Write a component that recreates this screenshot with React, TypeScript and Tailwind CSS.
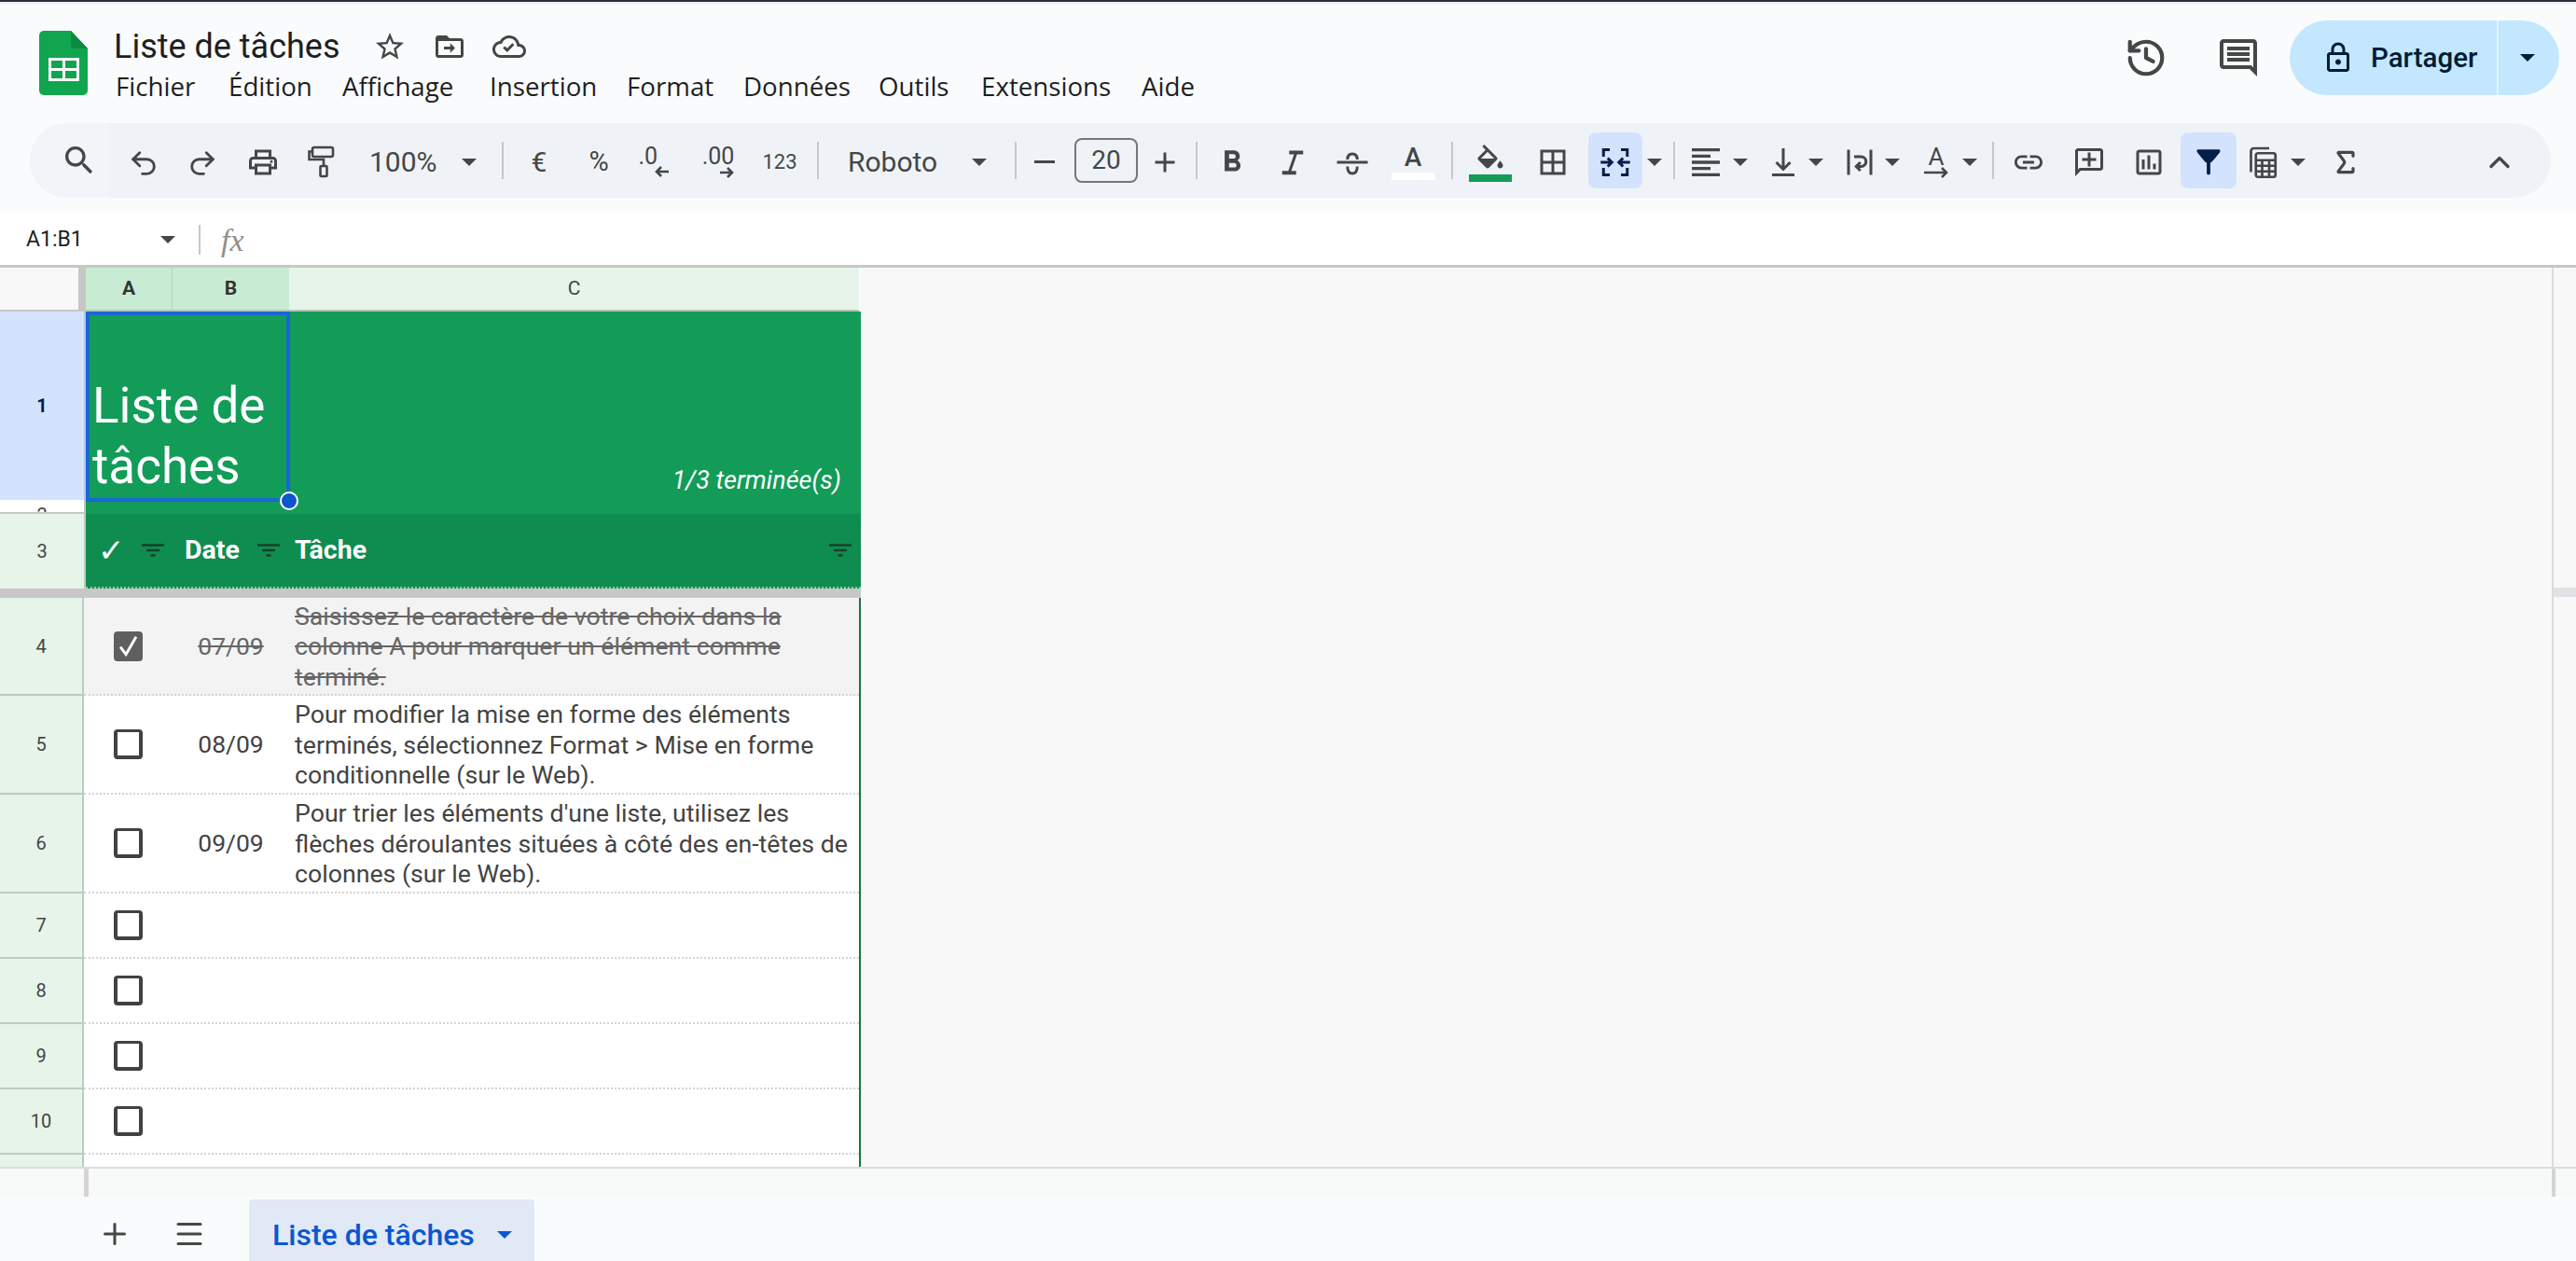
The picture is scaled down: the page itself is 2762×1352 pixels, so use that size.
import React from 'react';
import { ChevronUp, History, Menu, Plus, Redo2, Sigma, Undo2 } from 'lucide-react';
import { MdFormatBold } from 'react-icons/md';

const ROBOTO = "font-['Roboto',sans-serif]";

const Ico = ({ d, className = 'w-[36px] h-[36px] text-[#444746]' }: { d: string; className?: string }) => (
  <svg viewBox="0 0 24 24" fill="currentColor" className={className}>
    <path d={d} />
  </svg>
);

const Caret = ({ className = 'text-[#444746]' }: { className?: string }) => (
  <svg viewBox="0 0 16 8" fill="currentColor" className={'w-[16px] h-[8px] shrink-0 ' + className}>
    <path d="M0 0h16L8 8z" />
  </svg>
);

const Btn = ({ className, children }: { className: string; children?: React.ReactNode }) => (
  <div className={'flex items-center justify-center shrink-0 h-[60px] pt-[3px] text-[#444746] ' + className}>{children}</div>
);

const Sep = ({ className = '' }: { className?: string }) => (
  <div className={'w-[2px] h-[40px] bg-[#c7c7c7] shrink-0 ' + className} />
);

const SmallArrow = ({ left }: { left?: boolean }) => (
  <svg viewBox="0 0 16 12" fill="none" stroke="currentColor" strokeWidth="2.6" className="w-[16px] h-[12px]">
    {left ? <path d="M15 6H2M7 1 2 6l5 5" /> : <path d="M1 6h13M9 1l5 5-5 5" />}
  </svg>
);

const FilterLines = () => (
  <svg viewBox="0 0 24 14" fill="none" stroke="#17402c" strokeWidth="2.4" className="w-[24px] h-[14px] shrink-0">
    <path d="M0 1.5h24M5 7h14M9.5 12.5h5" />
  </svg>
);

const Checkbox = ({ checked }: { checked?: boolean }) =>
  checked ? (
    <div className="w-[31px] h-[32px] rounded-[4px] bg-[#5f5f5f] flex items-center justify-center">
      <svg viewBox="0 0 24 24" fill="none" stroke="white" strokeWidth="2.4" className="w-[29px] h-[29px]">
        <path d="M5 13l5 6.5L19 4" />
      </svg>
    </div>
  ) : (
    <div className="w-[31px] h-[32px] rounded-[4px] border-x-[4px] border-t-[3px] border-b-[4px] border-[#414141] bg-white" />
  );

const RowHead = ({ n }: { n: number }) => (
  <div className="w-[90px] shrink-0 flex items-center justify-center bg-[#e6f4ea] border-r-2 border-b-2 border-r-[#b9cdc0] border-b-[#b9cdc0] text-[20px] text-[#444]">
    {n}
  </div>
);

const TaskRow = ({ n, date, lines, done, height }: { n: number; date?: string; lines?: string[]; done?: boolean; height: string }) => (
  <div className={'flex ' + height}>
    <RowHead n={n} />
    <div className="w-[833px] border-r-2 border-[#1a7444]">
      <div className={'h-full flex border-b-2 border-dotted border-[#d4d4d4] ' + (done ? 'bg-[#f3f3f3]' : 'bg-white')}>
        <div className="w-[95px] flex items-center justify-center">
          <Checkbox checked={done} />
        </div>
        <div className={'w-[125px] flex items-center justify-center text-[26.5px] ' + (done ? 'line-through text-[#666]' : 'text-[#434343]')}>{date}</div>
        <div className={'flex-1 pl-[6px] pt-[2px] flex items-center text-[26.7px] leading-[32.5px] whitespace-nowrap ' + (done ? 'line-through text-[#666]' : 'text-[#434343]')}>
          {lines && (
            <div>
              {lines.map((l) => (
                <div key={l}>{l}</div>
              ))}
            </div>
          )}
        </div>
      </div>
    </div>
  </div>
);

const tasks = [
  {
    n: 4,
    date: '07/09',
    done: true,
    height: 'h-[105px]',
    lines: ['Saisissez le caractère de votre choix dans la', 'colonne A pour marquer un élément comme', 'terminé.'],
  },
  {
    n: 5,
    date: '08/09',
    height: 'h-[106px]',
    lines: ['Pour modifier la mise en forme des éléments', 'terminés, sélectionnez Format > Mise en forme', 'conditionnelle (sur le Web).'],
  },
  {
    n: 6,
    date: '09/09',
    height: 'h-[106px]',
    lines: ["Pour trier les éléments d'une liste, utilisez les", 'flèches déroulantes situées à côté des en-têtes de', 'colonnes (sur le Web).'],
  },
];

const MENUS: [string, string][] = [
  ['Fichier', 'w-[121px]'],
  ['Édition', 'w-[122px]'],
  ['Affichage', 'w-[158px]'],
  ['Insertion', 'w-[147px]'],
  ['Format', 'w-[125px]'],
  ['Données', 'w-[145px]'],
  ['Outils', 'w-[110px]'],
  ['Extensions', 'w-[172px]'],
  ['Aide', 'w-[60px]'],
];

const Header = () => (
  <div className="flex items-start h-[127px] shrink-0">
    <svg viewBox="0 0 52 69" className="w-[52px] h-[69px] ml-[42px] mt-[28px] shrink-0">
      <path d="M5 0h29l18 19v45a5 5 0 0 1-5 5H5a5 5 0 0 1-5-5V5a5 5 0 0 1 5-5z" fill="#11a54f" />
      <path d="M34 0l18 19H38a4 4 0 0 1-4-4z" fill="#0c8a40" />
      <path d="M10 29h33v25H10zm3 3v8h12v-8zm15 0v8h12v-8zM13 43v8h12v-8zm15 0v8h12v-8z" fill="white" fillRule="evenodd" />
    </svg>
    <div className="ml-[28px] flex flex-col">
      <div className="flex items-center mt-[25px] h-[40px]">
        <div className="w-[278px] text-[36px] leading-[40px] text-[#1f1f1f] font-['Roboto',sans-serif] whitespace-nowrap">Liste de tâches</div>
        <Ico d="M22 9.24l-7.19-.62L12 2 9.19 8.63 2 9.24l5.46 4.73L5.82 21 12 17.27 18.18 21l-1.63-7.03L22 9.24zM12 15.4l-3.76 2.27 1-4.28-3.32-2.88 4.38-.38L12 6.1l1.71 4.04 4.38.38-3.32 2.88 1 4.28L12 15.4z" />
        <Ico className="w-[36px] h-[36px] ml-[28px] text-[#444746]" d="M20 6h-8l-2-2H4c-1.1 0-2 .9-2 2v12c0 1.1.9 2 2 2h16c1.1 0 2-.9 2-2V8c0-1.1-.9-2-2-2zm0 12H4V8h16v10zM12.5 9.5L16 13l-3.5 3.5v-2.5H8v-2h4.5z" />
        <Ico className="w-[36px] h-[36px] ml-[28px] text-[#444746]" d="M19.35 10.04C18.67 6.59 15.64 4 12 4 9.11 4 6.6 5.64 5.35 8.04 2.34 8.36 0 10.91 0 14c0 3.31 2.69 6 6 6h13c2.76 0 5-2.24 5-5 0-2.64-2.05-4.78-4.65-4.96zM19 18H6c-2.21 0-4-1.79-4-4 0-2.05 1.53-3.76 3.56-3.97l1.07-.11.5-.95C8.08 7.14 9.94 6 12 6c2.62 0 4.88 1.86 5.39 4.43l.3 1.5 1.53.11c1.56.1 2.78 1.41 2.78 2.96 0 1.65-1.35 3-3 3zM10.5 16l-3-3 1.4-1.4 1.6 1.6 3.7-3.7 1.4 1.4z" />
      </div>
      <div className="flex mt-[3px] ml-[2px] h-[40px] items-center text-[27.7px] text-[#1f1f1f] font-['Open_Sans',sans-serif] whitespace-nowrap">
        {MENUS.map(([label, w]) => (
          <div key={label} className={w}>
            {label}
          </div>
        ))}
      </div>
    </div>
    <div className="ml-auto flex items-center mt-[17px] mr-[18px]">
      <History strokeWidth={2.2} className="w-[46px] h-[46px] text-[#444746]" />
      <Ico className="w-[48px] h-[48px] ml-[52px] text-[#444746]" d="M21.99 4c0-1.1-.89-2-1.99-2H4c-1.1 0-2 .9-2 2v12c0 1.1.9 2 2 2h14l4 4-.01-18zM20 4v13.17L18.83 16H4V4h16zM6 12h12v2H6zm0-3h12v2H6zm0-3h12v2H6z" />
      <div className="ml-[31px] flex h-[80px] w-[289px] rounded-full overflow-hidden bg-[#c2e7ff] text-[#001d35]">
        <div className="w-[222px] flex items-center pl-[34px]">
          <Ico className="w-[36px] h-[36px] text-[#001d35]" d="M18 8h-1V6c0-2.76-2.24-5-5-5S7 3.24 7 6v2H6c-1.1 0-2 .9-2 2v10c0 1.1.9 2 2 2h12c1.1 0 2-.9 2-2V10c0-1.1-.9-2-2-2zM9 6c0-1.66 1.34-3 3-3s3 1.34 3 3v2H9V6zm9 14H6V10h12v10zm-6-3c1.1 0 2-.9 2-2s-.9-2-2-2-2 .9-2 2 .9 2 2 2z" />
          <span className="ml-[17px] text-[29.5px] font-medium font-['Roboto',sans-serif]">Partager</span>
        </div>
        <div className="flex-1 border-l-2 border-[#e3f3ff] flex items-center pl-[23px]">
          <Caret className="text-[#001d35]" />
        </div>
      </div>
    </div>
  </div>
);

const Toolbar = () => (
  <div className={'ml-[32px] w-[2703px] h-[80px] shrink-0 rounded-full bg-[#eff3f8] flex items-center pr-[35px] text-[#444746] ' + ROBOTO}>
    <div className="w-[84px] h-full shrink-0 rounded-l-full rounded-r-[16px] bg-[#f1f4f9] flex items-center justify-end pr-[11px]">
      <Ico className="w-[40px] h-[40px] text-[#444746]" d="M15.5 14h-.79l-.28-.27C15.41 12.59 16 11.11 16 9.5 16 5.91 13.09 3 9.5 3S3 5.91 3 9.5 5.91 16 9.5 16c1.61 0 3.09-.59 4.23-1.57l.27.28v.79l5 4.99L20.49 19l-4.99-5zm-6 0C7.01 14 5 11.99 5 9.5S7.01 5 9.5 5 14 7.01 14 9.5 11.99 14 9.5 14z" />
    </div>
    <Btn className="w-[76px]"><Undo2 strokeWidth={2} className="w-[34px] h-[34px] mt-[2px]" /></Btn>
    <Btn className="w-[50px]"><Redo2 strokeWidth={2} className="w-[34px] h-[34px] mt-[2px]" /></Btn>
    <Btn className="w-[80px]">
      <Ico d="M19 8h-1V3H6v5H5c-1.66 0-3 1.34-3 3v6h4v4h12v-4h4v-6c0-1.66-1.34-3-3-3zM8 5h8v3H8V5zm8 12v2H8v-4h8v2zm2-2v-2H6v2H4v-4c0-.55.45-1 1-1h14c.55 0 1 .45 1 1v4h-2zM18 10.5a1 1 0 1 0 0 2 1 1 0 0 0 0-2z" />
    </Btn>
    <Btn className="w-[44px]">
      <svg viewBox="0 0 30 36" fill="none" stroke="currentColor" strokeWidth="2.6" className="w-[30px] h-[36px]">
        <rect x="6" y="2" width="22" height="10" rx="2" />
        <path d="M6 6.5H2.5v8.5H18v7" />
        <rect x="14.5" y="22" width="7" height="11" rx="1" />
      </svg>
    </Btn>
    <Btn className="w-[172px] !justify-start pl-[30px]">
      <span className="w-[99px] text-[30px]">100%</span>
      <Caret />
    </Btn>
    <Sep />
    <Btn className="w-[76px] text-[30px]">€</Btn>
    <Btn className="w-[52px] text-[29px]">%</Btn>
    <Btn className="w-[66px]">
      <div className="flex flex-col items-start leading-none">
        <span className="text-[25px] leading-[22px]">.0</span>
        <span className="ml-[17px] -mt-[1px]"><SmallArrow left /></span>
      </div>
    </Btn>
    <Btn className="w-[72px]">
      <div className="flex flex-col items-end leading-none">
        <span className="text-[25px] leading-[22px]">.00</span>
        <SmallArrow />
      </div>
    </Btn>
    <Btn className="w-[60px] text-[22px]">123</Btn>
    <Sep className="ml-[10px]" />
    <Btn className="w-[210px] !justify-start pl-[31px]">
      <span className="w-[133px] text-[30px]">Roboto</span>
      <Caret />
    </Btn>
    <Sep />
    <Btn className="w-[60px]">
      <div className="w-[22px] h-[3px] bg-[#444746]" />
    </Btn>
    <div className="ml-[2px] w-[68px] h-[48px] rounded-[8px] border-2 border-[#747775] flex items-center justify-center text-[28px] shrink-0">20</div>
    <Btn className="w-[58px]">
      <Ico d="M19 13h-6v6h-2v-6H5v-2h6V5h2v6h6v2z" />
    </Btn>
    <Sep className="ml-[4px]" />
    <Btn className="w-[74px]"><MdFormatBold className="w-[38px] h-[38px]" /></Btn>
    <Btn className="w-[56px]">
      <svg viewBox="0 0 24 24" fill="none" stroke="currentColor" className="w-[36px] h-[36px]">
        <path d="M9.5 5h10M4.5 19.5h10" strokeWidth="2.8" />
        <path d="M14.5 5 9.5 19.5" strokeWidth="2" />
      </svg>
    </Btn>
    <Btn className="w-[72px]">
      <svg viewBox="0 0 24 24" fill="none" stroke="currentColor" strokeWidth="2" className="w-[36px] h-[36px]">
        <path d="M1 12h22M8.5 10C8.5 7 10 6 12 6s3.5 1 3.5 4M8.5 15c0 3.5 1.5 5 3.5 5s3.5-1.5 3.5-5" />
      </svg>
    </Btn>
    <Btn className="w-[58px] !pt-0">
      <div className="flex flex-col items-center mt-[6px]">
        <span className="text-[28px] font-medium leading-[24px]">A</span>
        <div className="w-[47px] h-[8px] bg-white mt-[4px]" />
      </div>
    </Btn>
    <Sep className="ml-[12px]" />
    <Btn className="w-[80px] !pt-0">
      <div className="flex flex-col items-center mt-[6px]">
        <svg viewBox="0 0 24 20" fill="currentColor" className="w-[36px] h-[30px]">
          <path d="M16.56 8.94L7.62 0 6.21 1.41l2.38 2.38-5.15 5.15c-.59.59-.59 1.54 0 2.12l5.5 5.5c.29.29.68.44 1.06.44s.77-.15 1.06-.44l5.5-5.5c.59-.58.59-1.53 0-2.12zM5.21 10L10 5.21 14.79 10H5.21zM19 11.5s-2 2.17-2 3.5c0 1.1.9 2 2 2s2-.9 2-2c0-1.33-2-3.5-2-3.5z" />
        </svg>
        <div className="w-[46px] h-[8px] bg-[#129c58] mt-[2px]" />
      </div>
    </Btn>
    <Btn className="w-[54px]">
      <Ico d="M3 3v18h18V3H3zm8 16H5v-6h6v6zm0-8H5V5h6v6zm8 8h-6v-6h6v6zm0-8h-6V5h6v6z" />
    </Btn>
    <div className="ml-[11px] w-[58px] h-[60px] rounded-[8px] bg-[#d3e3fd] flex items-center justify-center shrink-0">
      <svg viewBox="0 0 24 24" fill="none" stroke="#041e49" strokeWidth="2" className="w-[36px] h-[36px] mt-[3px]">
        <path d="M8 3H3.5v5M16 3h4.5v5M8 21H3.5v-5M16 21h4.5v-5M1.5 12H9M6.5 9l3 3-3 3M22.5 12H15M17.5 9l-3 3 3 3" />
      </svg>
    </div>
    <Btn className="w-[26px]"><Caret /></Btn>
    <Sep className="ml-[7px]" />
    <Btn className="w-[40px] ml-[13px]">
      <Ico className="w-[40px] h-[40px]" d="M15 15H3v2h12v-2zm0-8H3v2h12V7zM3 13h18v-2H3v2zm0 8h18v-2H3v2zM3 3v2h18V3H3z" />
    </Btn>
    <Btn className="w-[20px] ml-[7px]"><Caret /></Btn>
    <Btn className="w-[40px] ml-[16px]">
      <svg viewBox="0 0 24 24" fill="none" stroke="currentColor" strokeWidth="2" className="w-[36px] h-[36px]">
        <path d="M12 2v15M7 12l5 5 5-5M4 21h16" />
      </svg>
    </Btn>
    <Btn className="w-[20px] ml-[5px]"><Caret /></Btn>
    <Btn className="w-[40px] ml-[17px]">
      <svg viewBox="0 0 24 24" fill="none" stroke="currentColor" strokeWidth="2" className="w-[36px] h-[36px]">
        <path d="M4 3v18M20 3v18M8 8h5a3.5 3.5 0 0 1 0 7h-3M12.5 12l-3 3 3 3" />
      </svg>
    </Btn>
    <Btn className="w-[20px] ml-[5px]"><Caret /></Btn>
    <Btn className="w-[40px] ml-[17px]">
      <div className="flex flex-col items-center">
        <span className="text-[26px] leading-[22px]">A</span>
        <svg viewBox="0 0 26 12" fill="none" stroke="currentColor" strokeWidth="2.6" className="w-[26px] h-[12px]">
          <path d="M0 6h24M19 1l5 5-5 5" />
        </svg>
      </div>
    </Btn>
    <Btn className="w-[20px] ml-[6px]"><Caret /></Btn>
    <Sep className="ml-[14px]" />
    <Btn className="w-[40px] ml-[17px]">
      <Ico d="M3.9 12c0-1.71 1.39-3.1 3.1-3.1h4V7H7c-2.76 0-5 2.24-5 5s2.24 5 5 5h4v-1.9H7c-1.71 0-3.1-1.39-3.1-3.1zM8 13h8v-2H8v2zm9-6h-4v1.9h4c1.71 0 3.1 1.39 3.1 3.1s-1.39 3.1-3.1 3.1h-4V17h4c2.76 0 5-2.24 5-5s-2.24-5-5-5z" />
    </Btn>
    <Btn className="w-[40px] ml-[25px]">
      <Ico d="M20 2H4c-1.1 0-2 .9-2 2v18l4-4h14c1.1 0 2-.9 2-2V4c0-1.1-.9-2-2-2zm0 14H5.17L4 17.17V4h16v12zM11 5h2v4h4v2h-4v4h-2v-4H7V9h4z" />
    </Btn>
    <Btn className="w-[40px] ml-[24px]">
      <Ico d="M9 17H7v-7h2v7zm4 0h-2V7h2v10zm4 0h-2v-4h2v4zm2 2H5V5h14v14zm0-16H5c-1.1 0-2 .9-2 2v14c0 1.1.9 2 2 2h14c1.1 0 2-.9 2-2V5c0-1.1-.9-2-2-2z" />
    </Btn>
    <div className="ml-[14px] w-[60px] h-[60px] rounded-[8px] bg-[#d3e3fd] flex items-center justify-center shrink-0">
      <Ico className="w-[38px] h-[38px] mt-[2px] text-[#041e49]" d="M4.25 5.61C6.27 8.2 10 13 10.8 13v7c0 .55.2 1 1.2 1s1.2-.45 1.2-1v-7c.8 0 4.52-4.8 6.54-7.39C20.25 4.95 19.78 4 18.95 4H5.04c-.83 0-1.3.95-.79 1.61z" />
    </div>
    <Btn className="w-[40px] ml-[9px]">
      <svg viewBox="0 0 24 24" fill="none" stroke="currentColor" strokeWidth="1.8" className="w-[36px] h-[36px]">
        <path d="M3 19V4a2 2 0 0 1 2-2h11" />
        <rect x="6.5" y="5.5" width="14" height="17" rx="1.5" />
        <path d="M6.5 10.5h14M6.5 14.5h14M6.5 18.5h14M11 10.5v12M16 10.5v12" />
      </svg>
    </Btn>
    <Btn className="w-[20px] ml-[7px]"><Caret /></Btn>
    <Btn className="w-[40px] ml-[21px]"><Sigma strokeWidth={2.4} className="w-[32px] h-[32px]" /></Btn>
    <Btn className="w-[40px] ml-auto"><ChevronUp strokeWidth={2.2} className="w-[36px] h-[36px]" /></Btn>
  </div>
);

const FormulaBar = () => (
  <div className={'mt-[16px] h-[59px] shrink-0 bg-white border-b-[3px] border-[#c7c7c7] flex items-center pt-[2px] ' + ROBOTO}>
    <span className="ml-[28px] w-[144px] text-[23px] text-[#1f1f1f]">A1:B1</span>
    <Caret />
    <div className="ml-[25px] w-[2px] h-[32px] bg-[#c7c7c7]" />
    <span className="ml-[22px] text-[34px] italic text-[#8f8f8f] font-['Liberation_Serif',serif]">fx</span>
  </div>
);

const Sheet = () => (
  <div className={'w-[923px] shrink-0 flex flex-col ' + ROBOTO}>
    <div className="flex h-[47px] shrink-0">
      <div className="w-[84px] bg-[#f8f8f8] border-b-2 border-[#c7c7c7]" />
      <div className="w-[8px] bg-[#c7c7c7]" />
      <div className="w-[93px] bg-[#c8ecd3] border-r border-b-2 border-r-[#b2d6bd] border-b-[#b2c9b9] flex items-center justify-center text-[21px] font-bold text-[#333]">A</div>
      <div className="w-[125px] bg-[#c8ecd3] border-b-2 border-[#b2c9b9] flex items-center justify-center text-[21px] font-bold text-[#333]">B</div>
      <div className="w-[611px] bg-[#e6f4ea] border-b-2 border-[#b2c9b9] flex items-center justify-center text-[21px] text-[#444]">C</div>
    </div>

    <div className="flex h-[202px] shrink-0 relative">
      <div className="w-[92px] shrink-0 bg-[#d3e3fd] flex items-center justify-center text-[20px] font-bold text-[#041e49] border-r-2 border-[#b6c7e2]">1</div>
      <div className="w-[831px] bg-[#129c58] flex text-white">
        <div className="w-[218px] px-[7px] pt-[69px] text-[53px] leading-[65px]">Liste de tâches</div>
        <div className="flex-1 flex items-end justify-end pr-[21px] pb-[1px] text-[27px] italic leading-[40px]">1/3 terminée(s)</div>
      </div>
      <div className="absolute left-[92px] top-0 w-[219px] h-[204px] border-[4px] border-[#1a66d6]" />
      <div className="absolute left-[300px] top-[193px] w-[20px] h-[20px] rounded-full bg-[#0b57d0] border-2 border-white" />
    </div>

    <div className="flex h-[15px] shrink-0">
      <div className="w-[92px] shrink-0 bg-white border-r-2 border-b-2 border-r-[#b9cdc0] border-b-[#c7c7c7] overflow-hidden flex justify-center pt-[6px] text-[20px] leading-[20px] text-[#444]">2</div>
      <div className="w-[831px] bg-[#129c58]" />
    </div>

    <div className="flex h-[80px] shrink-0">
      <div className="w-[92px] shrink-0 bg-[#e6f4ea] border-r-2 border-[#b9cdc0] flex items-center justify-center text-[20px] text-[#444]">3</div>
      <div className="w-[831px] bg-[#0f8c4f] flex text-white text-[28.5px] font-bold border-b-2 border-dotted border-[#8fc9a8]">
        <div className="w-[93px] flex items-center justify-between pl-[13px] pr-[9px]">
          <span className="text-[34px] font-normal">✓</span>
          <FilterLines />
        </div>
        <div className="w-[125px] flex items-center justify-between pl-[13px] pr-[10px]">
          <span>Date</span>
          <FilterLines />
        </div>
        <div className="flex-1 flex items-center justify-between pl-[6px] pr-[10px]">
          <span>Tâche</span>
          <FilterLines />
        </div>
      </div>
    </div>

    <div className="h-[10px] shrink-0 bg-[#c7c7c7]" />

    {tasks.map((t) => (
      <TaskRow key={t.n} {...t} />
    ))}
    {[7, 8, 9, 10].map((n) => (
      <TaskRow key={n} n={n} height="h-[70px]" />
    ))}
    <div className="flex flex-1 min-h-0 overflow-hidden">
      <div className="w-[90px] shrink-0 bg-[#e6f4ea] border-r-2 border-[#b9cdc0]" />
      <div className="w-[833px] bg-white border-r-2 border-[#1a7444]" />
    </div>
  </div>
);

export default function App() {
  return (
    <div className="w-[2762px] h-[1352px] overflow-hidden flex flex-col bg-[#f9fbfd]">
      <div className="h-[2px] shrink-0 bg-[#2b2d36]" />
      <div className="h-[3px] shrink-0 bg-[#eef0f4]" />
      <Header />
      <Toolbar />
      <FormulaBar />
      <div className="flex h-[964px] shrink-0">
        <Sheet />
        <div className="flex-1 bg-[#f8f8f8]" />
        <div className="w-[26px] flex flex-col border-l-2 border-[#dcdcdc] bg-[#f8f8f8]">
          <div className="h-[343px]" />
          <div className="h-[10px] bg-[#e1e1e6]" />
        </div>
      </div>
      <div className="h-[32px] shrink-0 bg-[#f8f9f9] border-t-2 border-[#dadce0] flex">
        <div className="ml-[90px] w-[5px] bg-[#d4d4d4]" />
        <div className="ml-auto mr-[22px] w-[4px] bg-[#d4d4d4]" />
      </div>
      <div className={'flex-1 flex items-end ' + ROBOTO}>
        <div className="flex items-center h-[66px] w-full">
          <Plus strokeWidth={2} className="ml-[105px] mt-[8px] w-[36px] h-[36px] text-[#444746]" />
          <Menu strokeWidth={2} className="ml-[44px] mt-[8px] w-[36px] h-[36px] text-[#444746]" />
          <div className="ml-[46px] w-[306px] h-full bg-[#e1e9f7] rounded-t-[4px] flex items-center pl-[25px] pt-[10px] text-[#0b57d0]">
            <span className="w-[241px] text-[32px] font-medium whitespace-nowrap">Liste de tâches</span>
            <Caret className="text-[#0b57d0]" />
          </div>
        </div>
      </div>
    </div>
  );
}
